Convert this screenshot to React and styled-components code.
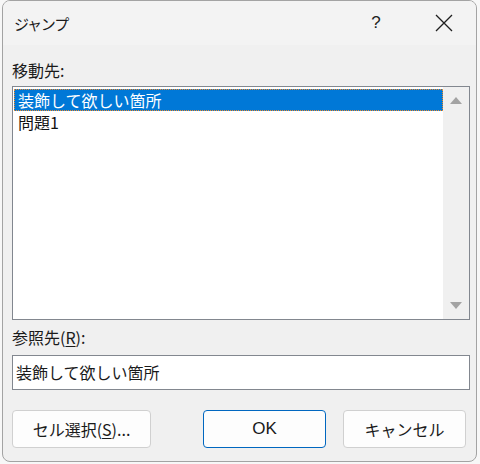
import React from "react";
import styled, { createGlobalStyle } from "styled-components";

const GlobalStyle = createGlobalStyle`
  html, body {
    margin: 0;
    padding: 0;
    background: #f7f7f7;
  }
  body {
    font-family: "Noto Sans CJK JP", "Noto Sans", sans-serif;
    color: #1a1a1a;
  }
`;

const Page = styled.div`
  width: 480px;
  height: 464px;
  padding-left: 2px;
  box-sizing: border-box;
`;

const Dialog = styled.div`
  width: 475px;
  height: 462px;
  box-sizing: border-box;
  border: 1px solid #a3a3a3;
  border-radius: 8px;
  background: #f0f0f0;
  overflow: hidden;
  display: flex;
  flex-direction: column;
`;

const TitleBar = styled.div`
  height: 44px;
  flex-shrink: 0;
  display: flex;
  align-items: center;
  background: #f3f3f3;
  padding-left: 11px;
`;

const Title = styled.div`
  flex: 1;
  font-size: 15px;
  letter-spacing: -1.2px;
  color: #1b1b1b;
`;

const TitleButton = styled.div`
  width: ${p => p.$w}px;
  margin-right: ${p => p.$right || 0}px;
  height: 44px;
  display: flex;
  align-items: center;
  justify-content: center;
  font-family: "Liberation Sans", sans-serif;
  font-size: 17px;
  color: #222;
`;

const Body = styled.div`
  padding: 14px 6px 0 9px;
  display: flex;
  flex-direction: column;
`;

const Label = styled.div`
  height: 22px;
  line-height: 22px;
  font-size: 16px;
  margin-top: ${p => p.$top || 0}px;
`;

const Key = styled.u`
  text-underline-offset: 2px;
`;

const ListBox = styled.div`
  height: 234px;
  box-sizing: border-box;
  border: 1px solid #82878f;
  background: #fff;
  display: flex;
  margin-top: 5px;
`;

const Items = styled.div`
  flex: 1;
  padding: 2px 0 0 1px;
`;

const Item = styled.div`
  height: 22px;
  box-sizing: border-box;
  line-height: 20px;
  font-size: 16px;
  padding-left: 3px;
  background: ${p => (p.$selected ? "#0078d7" : "transparent")};
  color: ${p => (p.$selected ? "#fff" : "#111")};
  border: 1px ${p => (p.$selected ? "dotted #f08a2a" : "solid transparent")};
`;

const ScrollBar = styled.div`
  width: 26px;
  background: #f0f0f0;
  display: flex;
  flex-direction: column;
  justify-content: space-between;
  align-items: center;
  padding: 10px 0 10px;
`;

const Arrow = styled.div`
  width: 0;
  height: 0;
  border-left: 6px solid transparent;
  border-right: 6px solid transparent;
  ${p =>
    p.$down
      ? "border-top: 7px solid #a3a3a3;"
      : "border-bottom: 7px solid #a3a3a3;"}
`;

const TextInput = styled.div`
  height: 35px;
  box-sizing: border-box;
  border: 1px solid #82878f;
  background: #fff;
  font-size: 16px;
  line-height: 33px;
  padding-left: 3px;
  margin-top: 7px;
`;

const ButtonRow = styled.div`
  display: flex;
  margin-top: 20px;
`;

const Button = styled.div`
  width: ${p => p.$w}px;
  height: 38px;
  box-sizing: border-box;
  border: 1px solid ${p => (p.$primary ? "#0067c0" : "#d0d0d0")};
  border-radius: 4px;
  background: #fdfdfd;
  display: flex;
  align-items: center;
  justify-content: center;
  font-size: 16px;
  color: #1a1a1a;
  margin-left: ${p => p.$left || 0}px;
`;

const Ok = styled.span`
  font-family: "Liberation Sans", sans-serif;
  font-size: 17px;
`;

export default function App() {
  return (
    <Page>
      <GlobalStyle />
      <Dialog>
        <TitleBar>
          <Title>ジャンプ</Title>
          <TitleButton $w={40} $right={15}>?</TitleButton>
          <TitleButton $w={65}>
            <svg width="18" height="18" viewBox="0 0 18 18">
              <path d="M1 1L17 17M17 1L1 17" stroke="#1f1f1f" strokeWidth="1.3" />
            </svg>
          </TitleButton>
        </TitleBar>
        <Body>
          <Label>移動先:</Label>
          <ListBox>
            <Items>
              <Item $selected>装飾して欲しい箇所</Item>
              <Item>問題1</Item>
            </Items>
            <ScrollBar>
              <Arrow />
              <Arrow $down />
            </ScrollBar>
          </ListBox>
          <Label $top={6}>
            参照先(<Key>R</Key>):
          </Label>
          <TextInput>装飾して欲しい箇所</TextInput>
          <ButtonRow>
            <Button $w={139}>
              セル選択(<Key>S</Key>)...
            </Button>
            <Button $w={123} $left={52} $primary>
              <Ok>OK</Ok>
            </Button>
            <Button $w={123} $left={17}>
              キャンセル
            </Button>
          </ButtonRow>
        </Body>
      </Dialog>
    </Page>
  );
}
